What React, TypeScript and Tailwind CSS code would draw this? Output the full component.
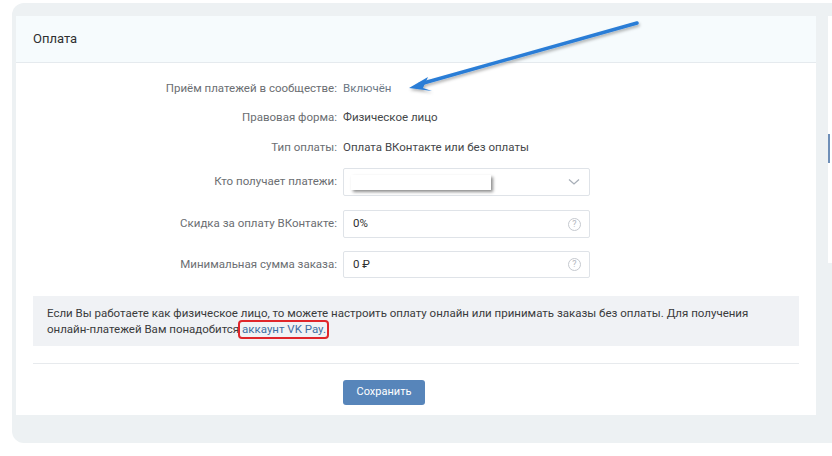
import React from 'react';

const font = { fontFamily: 'Roboto, "Open Sans", "Liberation Sans", sans-serif' };

function Label({ children }: { children: React.ReactNode }) {
  return <div className="w-[310px] shrink-0 text-right text-[11.5px] text-[#6b6e72] pr-[6px]">{children}</div>;
}

function Help() {
  return (
    <div className="w-[13px] h-[13px] rounded-full border border-[#c5c9cf] text-[#b4b8be] text-[9px] leading-[11px] text-center">?</div>
  );
}

export default function App() {
  return (
    <div className="relative w-[832px] h-[456px] bg-white overflow-hidden" style={font}>
      <div className="absolute left-[12px] top-[3px] w-[830px] h-[440px] bg-[#edf1f3] rounded-l-[12px] pt-[13px] pl-[4px] flex gap-[12px]">
        <div className="w-[800px] h-[399px] bg-white flex flex-col">
          <div className="h-[47px] bg-[#f6fbfd] border-b border-[#e5eaee] flex items-center px-[17px] text-[13px] text-[#2e2f30]">
            Оплата
          </div>
          <div className="px-[17px] pt-[16px] flex flex-col">
            <div className="h-[20px] flex items-center">
              <Label>Приём платежей в сообществе:</Label>
              <div className="text-[11.5px] text-[#6d7885]">Включён</div>
            </div>
            <div className="h-[20px] mt-[9px] flex items-center">
              <Label>Правовая форма:</Label>
              <div className="text-[11.5px] text-[#45474a]">Физическое лицо</div>
            </div>
            <div className="h-[20px] mt-[10px] flex items-center">
              <Label>Тип оплаты:</Label>
              <div className="text-[11.5px] text-[#45474a]">Оплата ВКонтакте или без оплаты</div>
            </div>
            <div className="h-[28px] mt-[10px] flex items-center">
              <Label>Кто получает платежи:</Label>
              <div className="w-[247px] h-[28px] border border-[#dfe3e8] rounded-[2px] flex items-center justify-between pl-[7px] pr-[9px]">
                <div className="w-[140px] h-[15px] bg-white shadow-[2px_2px_3px_rgba(0,0,0,0.45)]" />
                <svg width="12" height="8" viewBox="0 0 12 8" fill="none">
                  <path d="M1 1.5 L6 6 L11 1.5" stroke="#a8afb8" strokeWidth="1.3" />
                </svg>
              </div>
            </div>
            <div className="h-[28px] mt-[14px] flex items-center">
              <Label>Скидка за оплату ВКонтакте:</Label>
              <div className="w-[247px] h-[28px] border border-[#dfe3e8] rounded-[2px] flex items-center justify-between pl-[9px] pr-[8px] text-[11.5px] text-[#2e2f30]">
                <span>0%</span>
                <Help />
              </div>
            </div>
            <div className="h-[27px] mt-[13px] flex items-center">
              <Label>Минимальная сумма заказа:</Label>
              <div className="w-[247px] h-[27px] border border-[#dfe3e8] rounded-[2px] flex items-center justify-between pl-[9px] pr-[8px] text-[11.5px] text-[#2e2f30]">
                <span>0 ₽</span>
                <Help />
              </div>
            </div>
            <div className="mt-[18px] bg-[#f0f2f5] px-[14px] py-[9px] text-[11.5px] leading-[16px] text-[#3a3b3c]">
              Если Вы работаете как физическое лицо, то можете настроить оплату онлайн или принимать заказы без оплаты. Для получения онлайн-платежей Вам понадобится{' '}
              <span className="relative text-[#3f6fa3]">
                аккаунт VK Pay.
                <span className="absolute left-[-4px] right-[-3px] top-[-2px] bottom-[-3px] border-2 border-[#e0262b] rounded-[4px]" />
              </span>
            </div>
            <div className="mt-[17px] h-px bg-[#e7eaed]" />
            <div className="mt-[14px] pl-[310px]">
              <button className="w-[82px] h-[25px] rounded-[3px] bg-[#5785ba] text-white text-[11px]">Сохранить</button>
            </div>
          </div>
        </div>
        <div className="w-[10px] h-[247px] bg-white relative">
          <div className="absolute left-0 top-[118px] w-[2px] h-[29px] bg-[#6f8fb8]" />
        </div>
      </div>
      <svg className="absolute left-0 top-0 pointer-events-none" width="832" height="456">
        <defs>
          <filter id="sh" x="-10%" y="-50%" width="120%" height="200%">
            <feDropShadow dx="1" dy="2" stdDeviation="1.5" floodColor="#000" floodOpacity="0.3" />
          </filter>
        </defs>
        <g filter="url(#sh)">
          <line x1="637" y1="23" x2="420" y2="84" stroke="#2a7dd6" strokeWidth="3.5" strokeLinecap="round" />
          <polygon points="409,88 428,77 423,88 432,91" fill="#2a7dd6" />
        </g>
      </svg>
    </div>
  );
}
